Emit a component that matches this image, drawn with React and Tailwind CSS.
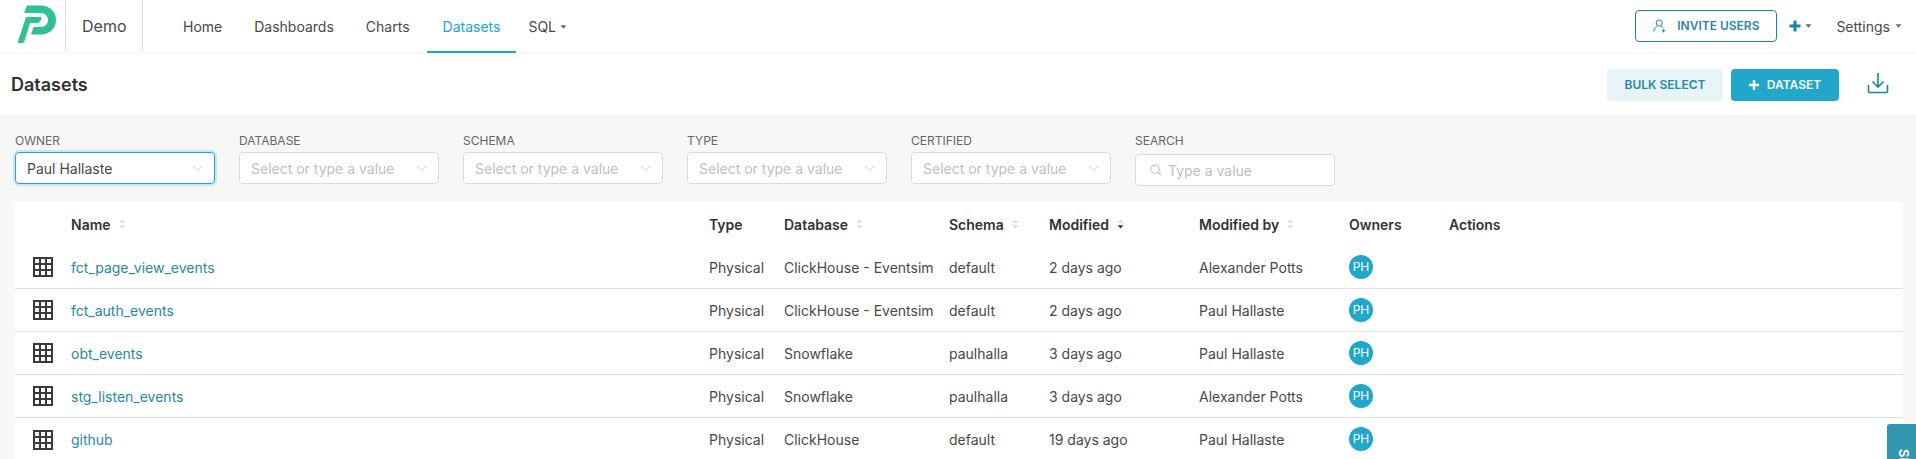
import React from "react";

function Caret({ className = "" }) {
  return (
    <svg width="7" height="4" viewBox="0 0 7 4" className={className}>
      <path d="M0.5 0.3h6L3.5 3.8z" fill="currentColor" />
    </svg>
  );
}

function Logo() {
  return (
    <svg width="39" height="38" viewBox="0 0 39 38">
      <path
        d="M10 0.5H24C33 0.5 39 7 39 15C39 23 33 29.5 24 29.5H14L16.5 22H24C28 22 31 19 31 15C31 11 28 8 24 8H7Z"
        fill="#2fc096"
      />
      <path d="M9 12H24.5C24.5 15.5 22.5 18 19.5 18H13L7.5 36C7.2 37.2 6.5 38 5.5 38H0.5Z" fill="#2fc096" />
    </svg>
  );
}

function Chevron() {
  return (
    <svg width="12" height="12" viewBox="0 0 12 12" fill="none">
      <path d="M1.5 3.8L6 8.5L10.5 3.8" stroke="#bdbdbd" strokeWidth="0.9" />
    </svg>
  );
}

function GridIcon() {
  return (
    <svg width="20" height="20" viewBox="0 0 20 20">
      <path
        fillRule="evenodd"
        d="M0 0H20V20H0ZM2 2V6H6V2ZM8 2V6H12V2ZM14 2V6H18V2ZM2 8V12H6V8ZM8 8V12H12V8ZM14 8V12H18V8ZM2 14V18H6V14ZM8 14V18H12V14ZM14 14V18H18V14Z"
        fill="#3a3a3a"
      />
    </svg>
  );
}

function SortIcon({ active = false }) {
  return (
    <svg width="7" height="10" viewBox="0 0 7 10" className="ml-[8px] shrink-0">
      <path d="M3.5 0.5L6.3 3.8H0.7Z" fill="#d9d9d9" />
      <path d="M3.5 9.5L6.3 6.2H0.7Z" fill={active ? "#323232" : "#d9d9d9"} />
    </svg>
  );
}

function Select({ label, value, focused = false }) {
  return (
    <div className="w-[200px] mr-[24px] pt-[18px]">
      <div className="text-[12px] leading-[16px] text-[#666666] uppercase h-[16px]">{label}</div>
      <div
        className={
          focused
            ? "mt-[3px] h-[32px] flex items-center justify-between pl-[11px] pr-[10px] bg-white rounded-[4px] border border-[#20a7c9] shadow-[0_0_0_2px_rgba(32,167,201,0.2)]"
            : "mt-[3px] h-[32px] flex items-center justify-between pl-[11px] pr-[10px] bg-white rounded-[4px] border border-[#d9d9d9]"
        }
      >
        <span className={value ? "text-[14px] text-[#484848]" : "text-[14px] text-[#bfbfbf]"}>
          {value || "Select or type a value"}
        </span>
        <Chevron />
      </div>
    </div>
  );
}

function Search() {
  return (
    <div className="w-[200px] pt-[18px]">
      <div className="text-[12px] leading-[16px] text-[#666666] uppercase h-[16px]">Search</div>
      <div className="mt-[5px] h-[32px] flex items-center pl-[14px] bg-white rounded-[4px] border border-[#d9d9d9]">
        <svg width="12" height="12" viewBox="0 0 13 13" fill="none" className="mr-[6px]">
          <circle cx="5.5" cy="5.5" r="4.5" stroke="#bdbdbd" strokeWidth="1.1" />
          <path d="M8.7 8.7L12.4 12.4" stroke="#bdbdbd" strokeWidth="1.1" />
        </svg>
        <span className="text-[14px] text-[#bfbfbf]">Type a value</span>
      </div>
    </div>
  );
}

const cols = "grid grid-cols-[56px_638px_75px_165px_100px_150px_150px_100px_1fr]";

const rows = [
  ["fct_page_view_events", "ClickHouse - Eventsim", "default", "2 days ago", "Alexander Potts"],
  ["fct_auth_events", "ClickHouse - Eventsim", "default", "2 days ago", "Paul Hallaste"],
  ["obt_events", "Snowflake", "paulhalla", "3 days ago", "Paul Hallaste"],
  ["stg_listen_events", "Snowflake", "paulhalla", "3 days ago", "Alexander Potts"],
  ["github", "ClickHouse", "default", "19 days ago", "Paul Hallaste"],
];

function NavItem({ children, active = false }) {
  return (
    <div
      className={
        active
          ? "h-[53px] px-[16px] flex items-center text-[14px] text-[#20a7c9] border-b-2 border-[#20a7c9] pt-[1px]"
          : "h-[53px] px-[16px] flex items-center text-[14px] text-[#484848]"
      }
    >
      {children}
    </div>
  );
}

function Head({ children, sort, active }) {
  return (
    <div className="flex items-center text-[14px] font-semibold text-[#323232]">
      {children}
      {sort && <SortIcon active={active} />}
    </div>
  );
}

export default function App() {
  return (
    <div className="relative h-[459px] overflow-hidden bg-white font-['Inter',sans-serif]">
      <header className="h-[54px] flex items-start justify-between border-b-2 border-[#f7f7f7] bg-white">
        <div className="flex items-start">
          <div className="w-[66px] h-[52px] flex items-center justify-end pr-[9px] border-r border-[#e0e0e0] pb-[4px]">
            <Logo />
          </div>
          <div className="w-[77px] h-[52px] flex items-center pl-[16px] border-r border-[#e0e0e0] text-[16px] text-[#484848]">
            Demo
          </div>
          <nav className="flex ml-[24px]">
            <NavItem>Home</NavItem>
            <NavItem>Dashboards</NavItem>
            <div className="mr-[1px]">
              <NavItem>Charts</NavItem>
            </div>
            <NavItem active>Datasets</NavItem>
            <div className="h-[53px] pl-[12px] flex items-center text-[14px] text-[#484848]">
              SQL
              <Caret className="ml-[4px] text-[#666666]" />
            </div>
          </nav>
        </div>
        <div className="flex items-center h-[52px] pr-[14px]">
          <div className="w-[142px] h-[32px] flex items-center justify-center rounded-[4px] border border-[#1a85a0] text-[12px] font-semibold text-[#2a87a2] mr-[12px]">
            <svg width="14" height="14" viewBox="0 0 14 14" fill="none" className="mr-[10px]">
              <circle cx="6.2" cy="3.9" r="3" stroke="#1a85a0" strokeWidth="1" />
              <path d="M1 12.6C1 9.4 2.8 7.9 4.6 7.2M7.8 7.2C8.6 7.5 9.4 8 9.9 8.7" stroke="#1a85a0" strokeWidth="1" />
              <path d="M10.6 10V13.6M8.8 11.8H12.4" stroke="#1a85a0" strokeWidth="1" />
            </svg>
            INVITE USERS
          </div>
          <svg width="12" height="12" viewBox="0 0 12 12" className="mr-[4px]">
            <path d="M4.5 0.5H7.5V4.5H11.5V7.5H7.5V11.5H4.5V7.5H0.5V4.5H4.5Z" fill="#1a85a0" />
          </svg>
          <Caret className="text-[#666666] mr-[24px]" />
          <span className="text-[14px] text-[#484848]">Settings</span>
          <Caret className="ml-[5px] text-[#666666]" />
        </div>
      </header>

      <div className="h-[61px] flex items-center justify-between pl-[11px] pr-[24px]">
        <h1 className="text-[18px] font-semibold text-[#323232]">Datasets</h1>
        <div className="flex items-center">
          <div className="w-[116px] h-[32px] flex items-center justify-center rounded-[4px] bg-[#e6f4f8] text-[12px] font-semibold text-[#2a87a2] mr-[8px]">
            BULK SELECT
          </div>
          <div className="w-[108px] h-[32px] flex items-center justify-center rounded-[4px] bg-[#20a7c9] text-[12px] font-semibold text-white mr-[28px]">
            <svg width="10" height="10" viewBox="0 0 10 10" className="mr-[8px]">
              <path d="M3.8 0H6.2V3.8H10V6.2H6.2V10H3.8V6.2H0V3.8H3.8Z" fill="white" />
            </svg>
            DATASET
          </div>
          <svg width="22" height="22" viewBox="0 0 22 22" fill="none" className="mr-[3px] mb-[3px]">
            <path d="M1.5 13V19.5C1.5 20.2 2 20.5 2.5 20.5H19.5C20 20.5 20.5 20.2 20.5 19.5V13" stroke="#1a85a0" strokeWidth="1.6" />
            <path d="M11 1V14.5M5.5 9.5L11 15L16.5 9.5" stroke="#1a85a0" strokeWidth="1.6" />
          </svg>
        </div>
      </div>

      <main className="bg-[#f7f7f7] h-[344px] pl-[15px] pr-[13px]">
        <div className="flex h-[87px]">
          <Select label="Owner" value="Paul Hallaste" focused />
          <Select label="Database" />
          <Select label="Schema" />
          <Select label="Type" />
          <Select label="Certified" />
          <Search />
        </div>
        <div className="bg-white h-[257px]">
          <div className={`${cols} h-[44px] items-center`}>
            <div />
            <Head sort>Name</Head>
            <Head>Type</Head>
            <Head sort>Database</Head>
            <Head sort>Schema</Head>
            <Head sort active>Modified</Head>
            <Head sort>Modified by</Head>
            <Head>Owners</Head>
            <Head>Actions</Head>
          </div>
          {rows.map((r, i) => (
            <div
              key={r[0]}
              className={
                i < 4
                  ? `${cols} h-[43px] items-center border-b border-[#e0e0e0] text-[14px] text-[#484848]`
                  : `${cols} h-[43px] items-center text-[14px] text-[#484848]`
              }
            >
              <div className="pl-[18px]">
                <GridIcon />
              </div>
              <div className="text-[#2a87a2]">{r[0]}</div>
              <div>Physical</div>
              <div>{r[1]}</div>
              <div>{r[2]}</div>
              <div>{r[3]}</div>
              <div>{r[4]}</div>
              <div>
                <div className="w-[24px] h-[24px] rounded-full bg-[#20a7c9] text-white text-[12px] flex items-center justify-center mb-[1px]">
                  PH
                </div>
              </div>
              <div />
            </div>
          ))}
        </div>
      </main>

      <div className="absolute left-[1887px] top-[424px] w-[29px] h-[100px] bg-[#3296b0] rounded-tl-[3px] pt-[25px] pl-[11px]">
        <span className="block w-[12px] text-white text-[13px] font-semibold [writing-mode:vertical-rl] leading-[12px]">Share</span>
      </div>
    </div>
  );
}
